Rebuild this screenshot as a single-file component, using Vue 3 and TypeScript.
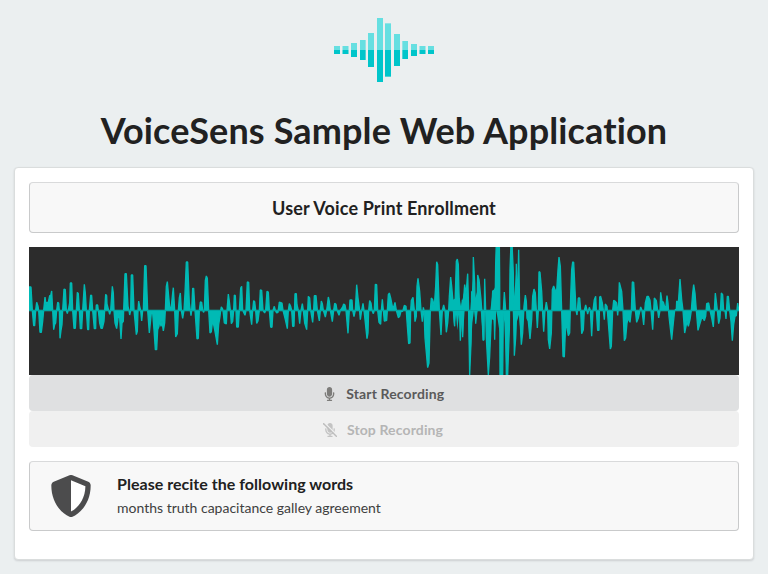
<script setup lang="ts">
interface Bar {
  x: number
  w: number
  up: number
  down: number
}

const bars: Bar[] = [
  { x: 0, w: 18, up: 12, down: 12 },
  { x: 25.5, w: 18, up: 12, down: 12 },
  { x: 51, w: 18, up: 21, down: 21 },
  { x: 78, w: 17, up: 30, down: 30 },
  { x: 102, w: 18, up: 51, down: 51 },
  { x: 129, w: 18, up: 96, down: 96 },
  { x: 153, w: 18, up: 80, down: 80 },
  { x: 180, w: 18, up: 48, down: 48 },
  { x: 205, w: 17, up: 27, down: 27 },
  { x: 231, w: 18, up: 18, down: 18 },
  { x: 256.5, w: 18, up: 12, down: 12 },
  { x: 282, w: 18, up: 12, down: 12 },
]

// Samples of the recorded signal, in four consecutive windows of 540 units.
const windows: string[] = [
  '12,132 18,132 22,202 26,248 29,248 32,202 35,178 39,190 41,202 45,268 49,268 53,235 56,202 60,162 63,185 66,178 70,178 74,158 77,158 80,144 83,202 86,260 89,245 92,240 95,202 98,178 101,180 103,202 105,286 108,262 111,245 113,202 117,138 121,140 124,202 127,212 131,195 134,180 136,120 140,120 143,202 147,256 151,256 154,202 157,148 160,152 163,202 166,257 170,257 173,202 178,124 181,150 184,202 188,260 191,260 193,202 197,156 200,158 203,202 208,257 212,257 213,202 214,186 218,186 220,202 224,240 228,256 232,256 237,235 239,202 242,154 245,158 246,183 251,202 254,214 257,202 262,130 265,150 267,202 270,240 275,257 278,235 281,208 284,225 288,288 291,240 295,235 296,202 300,92 304,92 309,190 312,202 314,216 317,202 319,96 323,96 327,202 334,275 337,265 339,202 341,174 344,190 347,202 350,234 353,202 355,202 359,68 363,68 368,202 373,270 376,240 379,210 383,210 387,260 391,320 395,320 398,260 402,250 404,230 408,250 411,235 415,264 419,240 421,202 424,130 427,116 431,160 435,202 439,190 443,150 445,134 449,202 452,282 457,272 460,202 463,165 466,150 469,202 473,226 477,202 480,150 484,57 488,57 493,180 498,218 500,202 503,136 506,136 510,202 516,288 520,286 523,202 526,177 530,178 533,202 536,208 538,202',
  '1,112 4,99 7,106 11,202 15,270 19,266 22,240 25,240 29,260 37,305 41,245 45,220 47,202 49,192 52,196 54,202 58,240 64,243 66,202 70,153 73,175 76,202 79,242 83,235 86,202 88,156 91,158 93,202 95,252 100,252 103,202 107,135 110,130 113,202 120,217 123,202 127,117 131,118 134,202 140,245 143,202 146,173 149,176 152,202 155,241 159,234 163,202 166,141 170,142 174,202 179,210 182,202 186,145 190,147 193,202 197,252 201,253 204,202 208,190 211,202 215,210 219,208 223,177 231,180 234,202 241,230 247,257 250,202 253,182 257,190 260,202 263,250 267,250 270,152 274,152 276,185 280,202 284,242 288,202 292,182 295,202 299,240 305,260 308,202 310,160 314,165 317,202 323,238 326,202 328,158 333,158 337,202 343,234 346,202 349,174 352,182 355,202 361,222 365,202 370,162 373,175 376,202 382,236 386,202 389,181 393,184 396,202 402,217 406,202 413,192 416,183 420,186 423,202 429,271 433,202 435,171 441,171 443,202 447,221 451,202 455,125 459,165 463,195 466,230 470,202 474,181 477,202 481,240 486,287 489,270 491,202 494,173 498,180 501,202 505,212 508,202 511,124 515,125 518,202 522,238 527,244 529,202 532,169 535,202 538,234',
  '0,234 5,232 7,202 10,155 13,150 17,165 22,190 26,192 30,178 34,202 40,224 44,220 48,205 53,205 58,187 63,190 66,235 71,302 75,300 77,202 79,173 84,163 88,202 90,236 94,220 96,130 99,106 104,145 108,202 112,236 115,193 117,202 120,285 128,374 132,360 136,202 139,165 143,170 148,190 152,130 155,56 158,65 163,202 168,276 172,202 176,186 180,202 184,268 188,240 191,202 193,160 197,102 200,130 204,175 207,235 209,250 211,150 214,55 217,48 220,65 222,150 224,202 226,293 230,202 232,170 233,283 236,165 239,125 243,155 248,92 251,202 254,396 258,300 260,145 263,202 265,42 269,120 272,242 276,202 278,96 282,110 288,170 291,210 294,292 297,290 299,107 302,202 304,285 310,396 314,340 319,225 323,145 326,142 329,290 332,60 334,0 343,0 344,110 345,396 353,396 355,202 358,147 362,202 364,396 368,396 373,260 375,80 378,0 381,0 385,90 388,338 392,285 394,62 397,202 401,20 404,202 409,305 413,270 417,190 421,156 424,175 426,226 430,235 435,288 440,230 443,160 447,138 451,150 454,202 457,255 460,202 462,86 465,88 470,145 473,210 476,266 480,202 484,177 488,202 490,290 494,318 499,270 502,140 506,129 510,140 515,145 519,80 522,42 526,70 530,202 534,340 538,342',
  '0,292 2,250 5,248 10,278 14,270 17,160 20,80 23,57 26,58 30,140 33,202 36,216 40,165 44,165 47,202 50,272 55,260 58,202 62,186 65,198 68,213 73,193 76,202 80,280 84,202 88,170 92,160 94,202 98,262 102,262 104,162 107,160 112,180 115,202 118,230 121,183 126,190 130,240 136,318 139,310 143,202 146,172 151,175 155,180 158,217 161,180 163,118 170,145 174,202 178,293 182,285 186,240 190,225 195,238 199,202 202,117 206,118 211,202 215,238 220,225 227,192 231,202 236,246 241,180 246,160 250,160 255,172 258,202 263,260 268,165 274,173 278,202 281,225 285,202 287,148 291,175 295,177 299,192 303,190 306,158 309,180 312,220 320,290 325,240 329,202 334,198 335,174 340,180 345,108 350,170 354,202 359,270 363,250 366,235 370,250 375,230 379,202 383,150 386,125 390,150 394,202 399,262 404,245 409,228 414,225 418,233 422,220 425,182 431,180 435,202 440,225 445,252 448,202 451,150 454,175 457,202 461,242 465,225 469,150 473,155 476,205 480,202 483,228 487,160 490,160 494,202 498,235 502,293 506,245 510,220 514,218 518,180 521,200',
]

// Where the signal is loud, both halves are filled at once; same units as the third window.
const loudRuns: string[] = [
  '192,202 197,150 205,170 212,165 224,165 228,190 232,172 239,140 244,160 248,130 251,202',
  '203,202 209,245 213,215 217,262 222,215 226,288 231,240 234,278 239,202',
  '249,202 254,390 262,240 267,202 272,240 277,202',
  '256,202 260,150 264,110 271,165 278,140 286,165 292,202',
  '287,202 294,285 298,202',
  '316,202 323,146 332,130 336,202',
  '302,202 310,390 319,228 326,232 329,285 334,202 344,270 346,202',
  '354,202 358,240 364,390 370,300 374,202',
  '383,202 388,150 394,80 398,130 401,60 404,202',
  '383,202 388,330 393,285 396,235 402,215 409,300 413,202',
]

const baseline = 190.5

function place(points: string, index: number): string[] {
  return points.split(' ').map((pair) => {
    const [x, y] = pair.split(',').map(Number)
    return `${x + index * 540 - 12} ${y - 12}`
  })
}

const samples = windows.flatMap(place)
const wave = `M0 ${baseline}L${samples.join('L')}L2130 ${baseline}Z`
const loud = loudRuns.map((run) => `M${place(run, 2).join('L')}Z`)

const words = ['months', 'truth', 'capacitance', 'galley', 'agreement']
const micPath =
  'M176 352c53.02 0 96-42.98 96-96V96c0-53.02-42.98-96-96-96S80 42.98 80 96v160c0 53.02 42.98 96 96 96zm160-160h-16c-8.84 0-16 7.16-16 16v48c0 74.8-64.49 134.82-140.79 127.38C96.71 376.89 48 317.11 48 250.3V208c0-8.84-7.16-16-16-16H16c-8.84 0-16 7.16-16 16v40.16c0 89.64 63.97 169.55 152 181.69V464H96c-8.84 0-16 7.16-16 16v16c0 8.84 7.16 16 16 16h160c8.84 0 16-7.16 16-16v-16c0-8.84-7.16-16-16-16h-56v-33.77C285.71 418.47 352 344.9 352 256v-48c0-8.84-7.16-16-16-16z'
</script>

<template>
  <main class="page">
    <svg class="logo" viewBox="0 0 300 192" aria-hidden="true">
      <g v-for="bar in bars" :key="bar.x">
        <rect class="bar-up" :x="bar.x" :y="96 - bar.up" :width="bar.w" :height="bar.up" />
        <rect class="bar-down" :x="bar.x" y="96" :width="bar.w" :height="bar.down" />
      </g>
    </svg>
    <h1 class="title">VoiceSens Sample Web Application</h1>

    <section class="panel">
      <h2 class="box heading">User Voice Print Enrollment</h2>

      <div class="recorder">
        <svg class="wave" viewBox="0 0 2130 384" preserveAspectRatio="none">
          <path class="signal" :d="wave" />
          <path v-for="run in loud" :key="run" class="loud" :d="run" />
          <path class="axis" d="M0 190.5H2130" />
        </svg>
        <button class="button" type="button">
          <svg class="mic" viewBox="0 0 352 512"><path :d="micPath" /></svg>
          <span>Start Recording</span>
        </button>
        <button class="button off" type="button" disabled>
          <svg class="mic-off" viewBox="0 0 512 512">
            <path transform="translate(80 0)" :d="micPath" />
            <path class="gap" d="M30 -28L530 466" />
            <path class="slash" d="M24 24L488 488" />
          </svg>
          <span>Stop Recording</span>
        </button>
      </div>

      <div class="box message">
        <svg class="shield" viewBox="0 0 512 512">
          <path class="shield-fill" d="M256 65.3l176 73.3c-3.3 151.4-82.1 261.1-175.8 307.7z" />
          <path
            d="M466.5 83.7l-192-80a48.15 48.15 0 0 0-36.9 0l-192 80C27.7 91.1 16 108.6 16 128c0 198.5 114.5 335.7 221.5 380.3 11.8 4.9 25.1 4.9 36.9 0C360.1 472.6 496 349.3 496 128c0-19.4-11.7-36.9-29.5-44.3zM256.1 446.3l-.1-381 175.9 73.3c-3.3 151.4-82.1 261.1-175.8 307.7z"
          />
        </svg>
        <div>
          <h3 class="message-title">Please recite the following words</h3>
          <p class="words">{{ words.join(' ') }}</p>
        </div>
      </div>
    </section>
  </main>
</template>

<style>
body {
  background: #ebeff0;
}
</style>

<style scoped>
.page {
  box-sizing: border-box;
  height: 574px;
  padding: 18px 14px 14px;
  display: flex;
  flex-direction: column;
  background: #ebeff0;
  color: #212121;
  font-family: Lato, 'Liberation Sans', sans-serif;
  font-variant-ligatures: none;
}

.logo {
  display: block;
  width: 100px;
  height: 64px;
  align-self: center;
}

.bar-up {
  fill: #66dfe1;
}

.bar-down {
  fill: #00c5ca;
}

.title {
  margin: 25px 0 14px;
  font-size: 36px;
  line-height: 46px;
  letter-spacing: 0.13px;
  font-weight: 700;
  text-align: center;
  white-space: nowrap;
}

.panel {
  box-sizing: border-box;
  height: 393px;
  padding: 14px;
  display: flex;
  flex-direction: column;
  gap: 14px;
  background: #fff;
  border: 1px solid #dadddd;
  border-radius: 4px;
  box-shadow: 0 1px 2px rgba(34, 36, 38, 0.15);
}

.box {
  box-sizing: border-box;
  background: #f8f8f8;
  border: 1px solid #c9cacb;
  border-top-color: #d9dadb;
  border-radius: 4px;
}

.heading {
  height: 51px;
  margin: 0;
  font-size: 18px;
  line-height: 51px;
  letter-spacing: 0.15px;
  font-weight: 700;
  text-align: center;
}

.recorder {
  display: flex;
  flex-direction: column;
}

.wave {
  display: block;
  width: 100%;
  height: 128px;
  background: #2c2c2c;
}

.signal {
  fill: #00bab5;
  stroke: #00bab5;
  stroke-width: 4;
  stroke-linejoin: bevel;
}

.loud {
  fill: #00bab5;
}

.axis {
  stroke: #00a7a3;
  stroke-width: 3;
}

.button {
  height: 36px;
  padding: 2px 0 0;
  display: flex;
  align-items: center;
  justify-content: center;
  border: 0;
  border-radius: 4px;
  background: #dfe0e1;
  color: #5a5a5a;
  font: 700 14px/14px Lato, 'Liberation Sans', sans-serif;
  letter-spacing: 0.13px;
}

.button.off {
  padding-right: 2px;
  background: #f0f0f0;
  color: #b5b5b5;
}

.mic,
.mic-off {
  height: 14px;
  fill: #7d7c7a;
}

.mic {
  width: 11px;
  margin-right: 11.5px;
}

.mic-off {
  width: 14px;
  margin-right: 10px;
  fill: #c3c3c3;
}

.gap {
  stroke: #f0f0f0;
  stroke-width: 52;
}

.slash {
  stroke: #bdbdbd;
  stroke-width: 52;
  stroke-linecap: round;
}

.message {
  height: 70px;
  padding-left: 20px;
  display: flex;
  align-items: center;
}

.shield {
  width: 42px;
  height: 42px;
  margin-right: 25px;
  fill: #4c4c4d;
}

.shield-fill {
  fill: #fff;
}

.message-title {
  margin: 0 0 3px;
  font-size: 16px;
  line-height: 22px;
  letter-spacing: 0.03px;
  font-weight: 700;
}

.words {
  margin: 0 0 1px;
  color: #404040;
  font-size: 14px;
  line-height: 20px;
}
</style>
